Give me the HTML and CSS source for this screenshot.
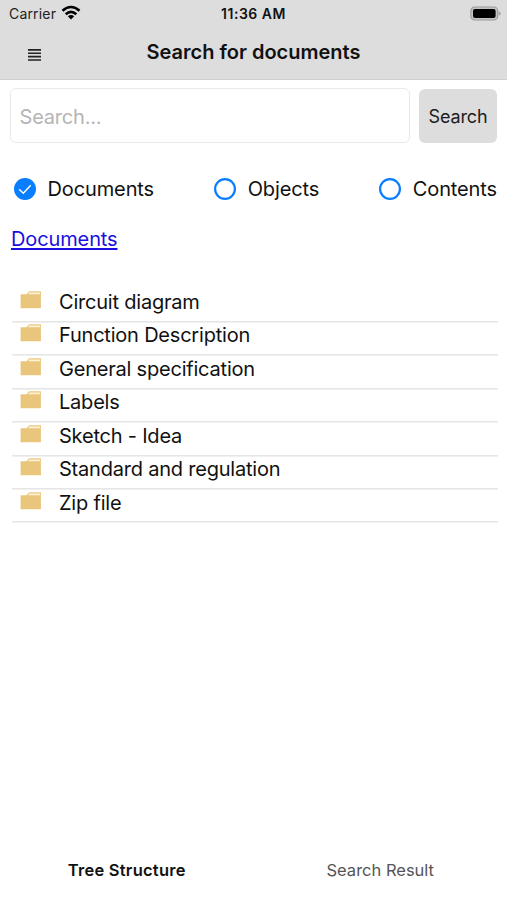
FILE: index.html
```html
<!DOCTYPE html>
<html lang="en">
<head>
<meta charset="utf-8">
<title>Search for documents</title>
<link rel="stylesheet" href="styles.css">
</head>
<body>
<svg class="defs" width="0" height="0" aria-hidden="true">
  <symbol id="folder" viewBox="0 0 22 18">
    <path fill="#eac67d" d="M.6 3.2H6.6L8.4 .9Q8.8 .3 9.6 .3H20.9V17.3H.6Z"/>
    <path fill="#fff3d5" d="M9.2 1.5H19.8V3.2H8Z"/>
  </symbol>
</svg>
<header class="header">
  <div class="status">
    <div class="carrier"><span class="carrier-name">Carrier</span>
      <svg class="wifi" width="20" height="16" viewBox="0 0 20 16" fill="none" stroke="#000" stroke-width="2.6">
        <path d="M1.5 5.8Q10 -1.8 18.5 5.8"/><path d="M4.7 9.2Q10 4.6 15.3 9.2"/><path fill="#000" stroke="none" d="M6.8 11.2Q10 8.6 13.2 11.2L10 14.6Z"/>
      </svg>
    </div>
    <div class="clock">11:36 AM</div>
    <svg class="battery" width="31" height="16" viewBox="0 0 31 16">
      <rect x=".9" y="1" width="26.8" height="13" rx="3.8" fill="#c4c4c4" stroke="#9c9c9c" stroke-width="1.2"/>
      <rect x="3" y="3" width="22.6" height="9" rx="2" fill="#000"/>
      <path d="M28.8 5.2Q30.6 6.2 30.6 7.5T28.8 9.8Z" fill="#9c9c9c"/>
    </svg>
  </div>
  <div class="nav">
    <svg class="menu" width="13" height="12" viewBox="0 0 13 12" stroke="#222" stroke-width="1.6"><path d="M0 .9H13M0 4.3H13M0 7.6H13M0 11H13"/></svg>
    <h1 class="title">Search for documents</h1>
  </div>
</header>
<main class="main">
  <form class="search">
    <input class="field" type="text" placeholder="Search...">
    <button class="button" type="button"><span>Search</span></button>
  </form>
  <div class="options">
    <div class="option"><svg class="radio" width="24" height="24" viewBox="0 0 24 24"><circle cx="12" cy="12" r="11" fill="#087dff"/><path d="M6.2 12.3L10.3 16.2L17.7 8.3" fill="none" stroke="#fff" stroke-width="1.5"/></svg><span>Documents</span></div>
    <div class="option"><svg class="radio" width="24" height="24" viewBox="0 0 24 24"><circle cx="12" cy="12" r="9.9" fill="#fff" stroke="#087dff" stroke-width="2.2"/></svg><span>Objects</span></div>
    <div class="option"><svg class="radio" width="24" height="24" viewBox="0 0 24 24"><circle cx="12" cy="12" r="9.9" fill="#fff" stroke="#087dff" stroke-width="2.2"/></svg><span>Contents</span></div>
  </div>
  <a class="crumb" href="#">Documents</a>
  <ul class="tree">
    <li class="row"><svg class="folder"><use href="#folder"/></svg><span>Circuit diagram</span></li>
    <li class="row"><svg class="folder"><use href="#folder"/></svg><span>Function Description</span></li>
    <li class="row"><svg class="folder"><use href="#folder"/></svg><span>General specification</span></li>
    <li class="row"><svg class="folder"><use href="#folder"/></svg><span>Labels</span></li>
    <li class="row"><svg class="folder"><use href="#folder"/></svg><span>Sketch - Idea</span></li>
    <li class="row"><svg class="folder"><use href="#folder"/></svg><span>Standard and regulation</span></li>
    <li class="row"><svg class="folder"><use href="#folder"/></svg><span>Zip file</span></li>
  </ul>
</main>
<nav class="tabs">
  <div class="tab active">Tree Structure</div>
  <div class="tab">Search Result</div>
</nav>
</body>
</html>
```
FILE: styles.css
```css
* { box-sizing: border-box; }
body {
  margin: 0;
  height: 900px;
  display: flex;
  flex-direction: column;
  overflow: hidden;
  background: #fff;
  color: #111;
  font-family: Inter, "Liberation Sans", sans-serif;
  font-size: 20px;
}
.defs { position: absolute; }
.header { height: 80px; background: #ddd; border-bottom: 1px solid #cfcfcf; }
.status {
  height: 28px;
  padding: 0 6px 0 9px;
  display: grid;
  grid-template-columns: 1fr auto 1fr;
  align-items: center;
}
.carrier { display: flex; align-items: center; gap: 5px; font-size: 14px; color: #222; }
.carrier-name { margin-top: -1px; letter-spacing: 0.18px; }
.wifi { margin-top: -2px; }
.clock { margin: -1px 3px 0 0; font-size: 14px; font-weight: 600; letter-spacing: 0.5px; }
.battery { justify-self: end; margin-top: -1px; }
.nav {
  height: 49px;
  padding: 0 28px;
  display: grid;
  grid-template-columns: 1fr auto 1fr;
  align-items: center;
}
.menu { margin-top: 4px; }
.title { margin: -1px 0 0; font-size: 20px; font-weight: 600; }
.main { flex: 1; padding: 8px 10px 0 10px; }
.search { display: flex; gap: 9px; }
.field {
  flex: 1;
  min-width: 0;
  height: 55px;
  padding: 2px 8.5px 0;
  border: 1px solid #e9e9e9;
  border-radius: 6px;
  outline: 0;
  background: #fff;
  font: inherit;
  letter-spacing: -0.2px;
}
.field::placeholder { color: #b5b5b5; opacity: 1; }
.button {
  width: 78px;
  height: 54px;
  margin-top: 1px;
  padding: 0;
  border: 0;
  border-radius: 6px;
  background: #ddd;
  color: #1c1c1c;
  font: inherit;
  font-size: 18px;
  letter-spacing: -0.15px;
}
.options { display: flex; justify-content: space-between; margin-top: 34px; padding-left: 3px; letter-spacing: -0.12px; }
.option { display: flex; align-items: center; gap: 10.5px; height: 24px; }
.crumb { display: block; width: max-content; margin: 26px 0 0 1px; line-height: 24px; color: #1a0fe0; letter-spacing: -0.12px; text-underline-offset: 2px; }
.tree { list-style: none; margin: 39px -1px 0 0; padding: 0 0 0 2px; letter-spacing: -0.21px; }
.row {
  display: flex;
  align-items: flex-start;
  gap: 17px;
  height: 33.43px;
  padding-left: 8px;
  background: linear-gradient(#e6e6e6, #e6e6e6) 0 calc(100% - 1px) / 100% 1.6px no-repeat;
  line-height: 24px;
}
.folder { width: 22px; height: 18px; margin-top: 1px; }
.tabs { display: grid; grid-template-columns: 1fr 1fr; height: 60px; line-height: 60px; text-align: center; font-size: 16.5px; color: #555; }
.active { font-weight: 600; color: #111; letter-spacing: 0.25px; }
```
